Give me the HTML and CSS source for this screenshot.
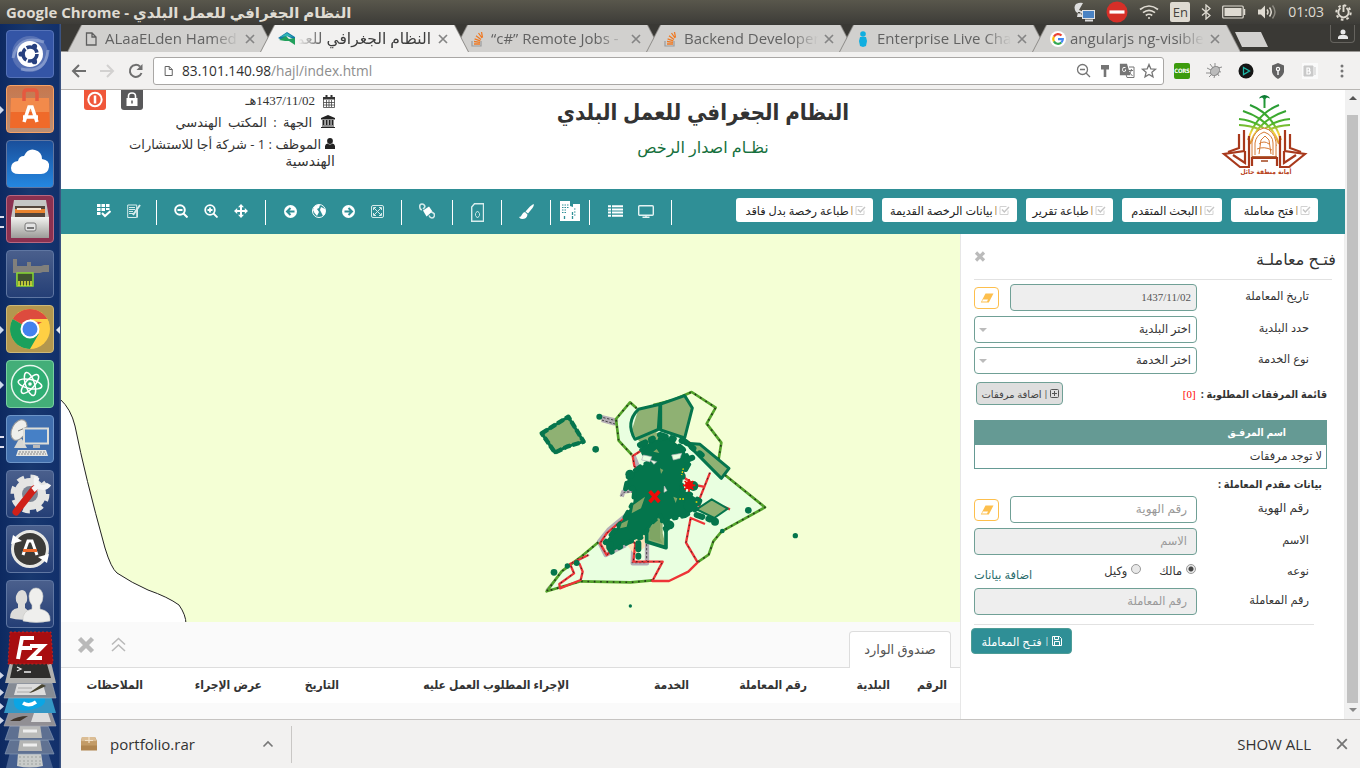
FILE: index.html
```html
<!DOCTYPE html>
<html lang="ar">
<head>
<meta charset="utf-8">
<title>النظام الجغرافي للعمل البلدي</title>
<link rel="stylesheet" href="styles.css">
</head>
<body>
<svg class="defs" aria-hidden="true">
  <defs>
    <linearGradient id="metal" x1="0" y1="0" x2="0" y2="1"><stop offset="0" stop-color="#f2f2f0"/><stop offset="1" stop-color="#9c9c98"/></linearGradient>
    <linearGradient id="palm" gradientUnits="userSpaceOnUse" x1="0" y1="0" x2="0" y2="84"><stop offset="0" stop-color="#0c8a3a"/><stop offset=".35" stop-color="#4fb52c"/><stop offset=".46" stop-color="#f3d33c"/><stop offset=".62" stop-color="#e08a35"/><stop offset="1" stop-color="#8f2115"/></linearGradient>
  </defs>
  <symbol id="doc" viewBox="0 0 12 14"><path d="M1.500 1h5.500l4 4v8h-9.500zM7 1v4h4" fill="none" stroke="#5f5f5f" stroke-width="1.300"/></symbol>
  <symbol id="cross" viewBox="0 0 10 10"><path d="M1 1l8 8M9 1l-8 8" stroke="#858585" stroke-width="1.700"/></symbol>
  <symbol id="stack" viewBox="0 0 13 16"><path d="M1 10v5h9v-5" fill="none" stroke="#9a9b9d" stroke-width="1.200"/><path d="M3 13h6M3 10.500l6 .8M3.600 7.800l5.700 2M5 4.800l5 3.700M7.500 2l3.500 5M10.500 1l1 5.500" stroke="#ef7a24" stroke-width="1.300"/></symbol>
  <symbol id="check" viewBox="0 0 11 11"><path d="M9 5.500V9.500H1V1.500h6.500" fill="none" stroke="#d2d2d2"/><path d="M3 4.500l2.300 2.500L10 2" fill="none" stroke="#c6c6c6" stroke-width="1.400"/></symbol>
  <symbol id="eraser" viewBox="0 0 14 10"><path d="M5.500.5h8L8.800 9.500h-8z" fill="#fdbf4d"/><path d="M3 6.500h5L7 8.500H2z" fill="#fff"/></symbol>
</svg>

<header class="panelbar">
  <div class="win-title" dir="rtl">النظام الجغرافي للعمل البلدي - Google Chrome</div>
  <div class="tray">
    <svg width="22" height="20" viewBox="0 0 22 20"><path d="M2 10Q-1 5 2 2q4-2 7-1L5 8l5 2Q6 13 2 10zM4 10l-1 5h6l-3-5" fill="#ddd"/><rect x="8.500" y="8.500" width="12" height="8" fill="#4a83c4" stroke="#e4e4e4"/><path d="M11 18.500h8" stroke="#ddd" stroke-width="2"/></svg>
    <svg width="22" height="22" viewBox="0 0 22 22"><circle cx="11" cy="11" r="10.500" fill="#d62f28"/><path d="M3.500 11h15" stroke="#fff" stroke-width="3.200"/></svg>
    <svg width="20" height="16" viewBox="0 0 20 16" fill="none" stroke="#dfdbd2" stroke-width="1.700"><path d="M1 5.500Q10-1.500 19 5.500M4 8.700Q10 4 16 8.700M6.800 11.500q3.200-2.500 6.400 0"/><circle cx="10" cy="14" r="1" fill="#dfdbd2" stroke="none"/></svg>
    <span class="lang">En</span>
    <svg width="10" height="16" viewBox="0 0 10 16"><path d="M1 4.500l8 7L5 15V1l4 3.500-8 7" fill="none" stroke="#dfdbd2" stroke-width="1.300"/></svg>
    <svg width="24" height="14" viewBox="0 0 24 14"><rect x=".7" y="1" width="20.500" height="12" rx="1" fill="none" stroke="#dfdbd2" stroke-width="1.200"/><rect x="2.500" y="3" width="17" height="8" fill="#dfdbd2"/><path d="M22.500 4v6" stroke="#dfdbd2" stroke-width="1.500"/></svg>
    <svg width="20" height="16" viewBox="0 0 20 16"><path d="M1 5.500h3l4-4v13l-4-4H1z" fill="#dfdbd2"/><path d="M10 5.500q2 2.500 0 5M12.500 3.500q3.500 4.500 0 9" fill="none" stroke="#dfdbd2" stroke-width="1.500"/><path d="M15.500 1.500q5 6.500 0 13" fill="none" stroke="#8b8980" stroke-width="1.500"/></svg>
    <span class="clock">01:03</span>
    <svg width="17" height="17" viewBox="0 0 17 17"><circle cx="8.500" cy="8.500" r="7.200" fill="none" stroke="#dfdbd2" stroke-width="2" stroke-dasharray="2.600 3.050"/><path d="M5.500 4a5.200 5.200 0 1 0 6 0M8.500 1v7" fill="none" stroke="#dfdbd2" stroke-width="1.900"/></svg>
  </div>
</header>

<div class="desktop">
  <nav class="launcher">
    <span class="app blue"><svg viewBox="0 0 48 48"><circle cx="24" cy="24" r="18" fill="#7488c0" opacity=".55"/><path d="M7 28Q12 4 38 12M42 20Q40 44 15 39" fill="none" stroke="#9fb0da" stroke-width="3" opacity=".6"/><circle cx="24" cy="24" r="13" fill="#fff"/><circle cx="24" cy="24" r="7" fill="none" stroke="#27407f" stroke-width="3.600" stroke-dasharray="13 1.660"/><circle cx="15" cy="24" r="2.600" fill="#27407f"/><circle cx="28.500" cy="16.300" r="2.600" fill="#27407f"/><circle cx="28.500" cy="31.700" r="2.600" fill="#27407f"/></svg></span>
    <span class="app orange pip"><svg viewBox="0 0 48 48"><path d="M5 13h38l1 30H4z" fill="#ef6a2a"/><path d="M5 13h38l.3 14H4.500z" fill="#f28a4b"/><path d="M18 16V8q0-3 3-3h7q3 0 3 3v8" fill="none" stroke="#e5593f" stroke-width="3.500"/><path d="M18 37l5-15h3l5 15M17 32h15" fill="none" stroke="#fff" stroke-width="3.500"/></svg></span>
    <span class="app sky"><svg viewBox="0 0 48 48"><path d="M13 34q-8 0-8-6t7-7q1-5 6-5 4-8 11-6t7 9q8 1 7 8t-8 7z" fill="#fff"/></svg></span>
    <span class="app maroon pips"><svg viewBox="0 0 48 48"><path d="M8 5h32l3 18v20H5V23z" fill="#c6c6c4"/><path d="M9 11h30v14H9z" fill="#54453b"/><path d="M9 14h30v4H9z" fill="#e9832e"/><path d="M11 13h24v2H11z" fill="#f5e5d2"/><path d="M5 22h38v21H5z" fill="url(#metal)"/><rect x="19" y="28" width="11" height="8" rx="2" fill="#e3e3e3" stroke="#777"/><path d="M21 33h7" stroke="#777" stroke-width="2"/></svg></span>
    <span class="app"><svg viewBox="0 0 48 48"><path d="M7 9h4v7h24l3-1h5v7h-6l-3 1H17v5h-4v7h-3V23H7zM21 12h4v4h-4z" fill="#81807c"/><rect x="11" y="23" width="16" height="13" fill="#3f5230" stroke="#87d630" stroke-width="1.500"/><path d="M13 31v5m3-5v5m3-5v5m3-5v5m3-5v5" stroke="#dce03b" stroke-width="1.600"/></svg></span>
    <span class="app gold pip active"><svg viewBox="0 0 48 48"><circle cx="24" cy="24" r="20" fill="#ffcf44"/><path d="M24 24L6.700 14A20 20 0 0 1 41.300 14z" fill="#dd4b3e"/><path d="M24 14h17.300A20 20 0 0 1 43 18L24 16z" fill="#ffcf44"/><path d="M6.700 14A20 20 0 0 0 24 44l8.700-15L24 24z" fill="#1aa05c"/><circle cx="24" cy="24" r="9.500" fill="#fff"/><circle cx="24" cy="24" r="7.500" fill="#4382ee"/></svg></span>
    <span class="app green pip"><svg viewBox="0 0 48 48"><circle cx="24" cy="24" r="18.500" fill="#2fae73" stroke="#e7f7ee" stroke-width="1.500"/><g fill="none" stroke="#fff" stroke-width="1.500"><ellipse cx="24" cy="24" rx="12" ry="4.500" transform="rotate(12 24 24)"/><ellipse cx="24" cy="24" rx="12" ry="4.500" transform="rotate(72 24 24)"/><ellipse cx="24" cy="24" rx="12" ry="4.500" transform="rotate(132 24 24)"/></g><circle cx="24" cy="24" r="1.800" fill="#fff"/></svg></span>
    <span class="app steel pips"><svg viewBox="0 0 48 48"><path d="M13 24l-5 9h13l-5-9" fill="#d8d8d4"/><ellipse cx="13" cy="15" rx="7" ry="11" transform="rotate(28 13 15)" fill="#efefeb" stroke="#999"/><path d="M12 16l9-4" stroke="#777"/><rect x="18" y="13.500" width="24" height="15" fill="#4680c6" stroke="#deded8" stroke-width="2"/><path d="M27 30h7v3h-7z" fill="#bbb"/><path d="M12 35h28l2 6H10z" fill="#e6e6e2"/><path d="M13 37h27M12 39h28" stroke="#888" stroke-dasharray="2 1"/></svg></span>
    <span class="app"><svg viewBox="0 0 48 48"><circle cx="24" cy="24" r="16" fill="#e5e5e3"/><circle cx="24" cy="24" r="17" fill="none" stroke="#e5e5e3" stroke-width="5" stroke-dasharray="7 6.350"/><circle cx="24" cy="24" r="8" fill="#7e8593"/><path d="M10 42l18-23" stroke="#d02018" stroke-width="7" stroke-linecap="round"/><path d="M27 20l7-6M31 7q-3 8 3 10t9-3" fill="none" stroke="#f4f4f4" stroke-width="5"/></svg></span>
    <span class="app"><svg viewBox="0 0 48 48"><circle cx="24" cy="24" r="17.500" fill="#3c3b38" stroke="#e8e8e4" stroke-width="3"/><path d="M5 19l2-9 9 6zM43 29l-2 9-9-6z" fill="#fff"/><path d="M17 30l5-14h4l5 14" fill="none" stroke="#fff" stroke-width="3"/><path d="M17 25.500h14" stroke="#f06a2a" stroke-width="3"/></svg></span>
    <span class="app"><svg viewBox="0 0 48 48"><path d="M4 38q0-9 8-10v-4q-3-3-2-8 2-6 6-6t5 6q1 5-2 8v4l6 5v6q-12 2-21-1z" fill="#dcdcda"/><path d="M17 41q-1-10 9-12v-4q-3-3-3-9 1-8 7-8t7 8q0 6-3 9v4q11 2 10 12-14 3-27 0z" fill="#efefed" stroke="#c7c7c5" stroke-width=".6"/></svg></span>
    <svg class="folded" viewBox="0 631 61 137" width="61" height="137">
      <path d="M0 672l4 3.500-4 3.500zM0 689l4 3.500-4 3.500zM0 703l4 3.500-4 3.500zM0 717l4 3.500-4 3.500z" fill="#cfd6e6"/>
      <path d="M10 752h38l5 16H6z" fill="#46608f"/><path d="M18 753q11-4 23 0l2 13q-13 3-26 0z" fill="#c9ccca"/><path d="M19 757h22m-22 4h22m-22 3h22" stroke="#9da2a0" stroke-dasharray="2 2"/>
      <path d="M10 740h38l6 14H5z" fill="#607292" stroke="#8c9dbb" stroke-width=".6"/><path d="M20 738h20l2 13H18z" fill="#b4b5b4"/><path d="M23 745h14" stroke="#eee" stroke-width="3"/>
      <path d="M10 726h38l6 14H5z" fill="#5e7091" stroke="#8c9dbb" stroke-width=".6"/><path d="M20 724h20l2 14H18z" fill="#bcbcba"/><path d="M23 731h14" stroke="#eee" stroke-width="3"/>
      <path d="M9 712h42l5 14H4z" fill="#918f94" stroke="#a7adbb" stroke-width=".6"/><path d="M10 721q7-5 18-5l-8 5z" fill="#40362d"/><path d="M34 713h14l3 9H31z" fill="#ddd"/>
      <path d="M9 696h42l5 17H4z" fill="#3497c5"/><path d="M14 698q0-5 15-5t16 7-16 10-15-12z" fill="#0ba5e4"/><path d="M23 703q6 4 13-1" fill="none" stroke="#fff" stroke-width="3.500"/>
      <path d="M9 683h43l4 15H4z" fill="#858b94" stroke="#abb2bd" stroke-width=".6"/><path d="M17 684h26l3 11H14z" fill="#ddd"/><path d="M18 688h14m-15 4h15" stroke="#aaa"/><path d="M29 693l13-9 4 2-13 6z" fill="#46432f"/>
      <path d="M10 662h41l5 21H5z" fill="#b0b0ae"/><path d="M13 664h34l4 14H10z" fill="#2e2d2c"/><path d="M17 667l4 2-4 2M24 672h7" fill="none" stroke="#eee" stroke-width="1.300"/>
      <path d="M10 632h41l2 30-1 2H8z" fill="#a80d10" stroke="#bd2423" stroke-dasharray="2 2"/><path d="M18 659l4-21h12M20 648h12M30 646h13l-12 12h11" fill="none" stroke="#fff" stroke-width="4"/>
    </svg>
  </nav>

  <div class="browser">
    <div class="tabstrip">
      <div class="tab"><svg class="fav" width="12" height="14"><use href="#doc"/></svg><span class="tab-text">ALaaELden Hamed</span><svg class="x" width="10" height="10"><use href="#cross"/></svg></div>
      <div class="tab active-tab"><svg class="fav" width="17" height="13" viewBox="0 0 17 13"><path d="M0 6l9-6 8 5v3L9 4 4 8z" fill="#1279a8"/><path d="M1 8l7-4 3 3 6-1v7l-6-4-4 0z" fill="#22a05c"/><path d="M2 5l7-4 6 4-6-1z" fill="#31b6b4"/></svg><span class="tab-text rtl-tab" dir="rtl">النظام الجغرافي للعمل</span><svg class="x" width="10" height="10"><use href="#cross"/></svg></div>
      <div class="tab"><svg class="fav" width="13" height="16"><use href="#stack"/></svg><span class="tab-text">“c#” Remote Jobs -</span><svg class="x" width="10" height="10"><use href="#cross"/></svg></div>
      <div class="tab"><svg class="fav" width="13" height="16"><use href="#stack"/></svg><span class="tab-text">Backend Developer</span><svg class="x" width="10" height="10"><use href="#cross"/></svg></div>
      <div class="tab"><svg class="fav" width="12" height="16" viewBox="0 0 12 16"><circle cx="6" cy="3" r="2.800" fill="#10aee0"/><path d="M3 6h6l1 4-1 5-3 1-3-1-1-5z" fill="#10aee0"/></svg><span class="tab-text">Enterprise Live Cha</span><svg class="x" width="10" height="10"><use href="#cross"/></svg></div>
      <div class="tab"><svg class="fav" width="16" height="16" viewBox="0 0 16 16"><circle cx="8" cy="8" r="8" fill="#fff"/><g fill="none" stroke-width="2.200"><path d="M11.500 4.600A4.800 4.800 0 0 0 3.900 5.600" stroke="#ea4335"/><path d="M3.900 5.600a4.800 4.800 0 0 0 0 4.800" stroke="#fbbc05"/><path d="M3.900 10.400a4.800 4.800 0 0 0 7.400 1.100" stroke="#34a853"/><path d="M11.300 11.500A4.800 4.800 0 0 0 12.800 8.200H8" stroke="#4285f4"/></g></svg><span class="tab-text">angularjs ng-visible</span><svg class="x" width="10" height="10"><use href="#cross"/></svg></div>
      <span class="newtab"></span>
      <span class="profile"><svg width="10" height="10" viewBox="0 0 10 10" fill="#e8e8e8"><circle cx="5" cy="3" r="2.500"/><path d="M0 10V8q1-2 3-2h4q2 0 3 2v2z"/></svg></span>
    </div>

    <div class="toolbar">
      <svg width="76" height="18" viewBox="0 0 76 18" fill="none" stroke-width="2"><path d="M8 3L2 9l6 6M2 9h13" stroke="#6e6e6e"/><path d="M36 3l6 6-6 6M42 9H29" stroke="#d2d1d0"/><path d="M69 4.500A6 6 0 1 0 70.500 11" stroke="#6e6e6e"/><path d="M71.500 2v6h-6z" fill="#6e6e6e"/></svg>
      <div class="omnibox">
        <svg width="9" height="12"><use href="#doc"/></svg>
        <span class="url"><span class="host">83.101.140.98</span>/hajl/index.html</span>
        <svg width="82" height="16" viewBox="0 0 82 16" fill="none" stroke="#757575" stroke-width="1.300"><circle cx="6.500" cy="6.500" r="5"/><path d="M4 6.500h5M10 10l4 4"/><path d="M25 2h8v4.500h-8z" fill="#757575" stroke="none"/><path d="M29 6v8" stroke-width="2.600"/><path d="M44.500 1.500h6l3 10h-9z" fill="#777"/><path d="M53 4h5v10.500h-7l-1-3M51.500 7.500h5.500M55.500 6q-.5 4-3 6M53 9l3.500 4" stroke-width="1"/><path d="M49.500 4.500q-3-1-3 2t3 1.500V6.500" stroke="#fff" stroke-width="1"/><path d="M73 1.500l1.800 4.300 4.700.4-3.600 3.100 1.100 4.600-4-2.500-4 2.500 1.100-4.600-3.600-3.100 4.700-.4z"/></svg>
      </div>
      <div class="exts">
        <span class="cors">CORS</span>
        <svg width="16" height="16" viewBox="0 0 16 16"><path d="M1 5l4 2M0 10h5M3 14l3-3M4 1l3 4M9 0l0 4M8 15l1-4M13 13l-2-3M15 9l-4-1M16 4l-4 1" stroke="#8d8d8d"/><ellipse cx="9" cy="8" rx="5" ry="4" transform="rotate(-45 9 8)" fill="#bbb" stroke="#888"/></svg>
        <svg width="16" height="16" viewBox="0 0 16 16"><circle cx="8" cy="8" r="7.500" fill="#151515"/><path d="M5.500 4.500l6 3.500-6 3.500z" fill="none" stroke="#1fb8a8" stroke-width="1.300"/></svg>
        <svg width="16" height="16" viewBox="0 0 16 16"><path d="M8 0l6 2.500V9q-1 4-6 7-5-3-6-7V2.500z" fill="#626262"/><circle cx="8" cy="6" r="2.200" fill="#fff"/><circle cx="8" cy="6" r="1" fill="#626262"/><path d="M8 8v4" stroke="#fff" stroke-width="1.400"/></svg>
        <svg width="16" height="16" viewBox="0 0 16 16"><path d="M0 0h16v16H0z" fill="#fafafa"/><path d="M2 3h9v10H2zM13 4v8" fill="#c9c9c9" stroke="#c9c9c9"/><path d="M5 5v6h2.500q1.500-1.500 0-3H5h2q1.500-1.500 0-3z" fill="none" stroke="#fff" stroke-width="1.200"/></svg>
        <svg width="16" height="16" viewBox="0 0 16 16" fill="#757575"><circle cx="8" cy="3" r="1.500"/><circle cx="8" cy="8" r="1.500"/><circle cx="8" cy="13" r="1.500"/></svg>
      </div>
    </div>

    <div class="viewport">
      <main class="page">
        <header class="site-head">
          <div class="actions">
            <svg width="22" height="20" viewBox="0 0 22 20"><path d="M0 0h22v17q0 3-3 3H3q-3 0-3-3z" fill="#f0573a"/><circle cx="11" cy="9.500" r="6.700" fill="none" stroke="#fff" stroke-width="2"/><path d="M11 5.500v8" stroke="#fff" stroke-width="2.500"/></svg>
            <svg width="22" height="20" viewBox="0 0 22 20"><path d="M0 0h22v17q0 3-3 3H3q-3 0-3-3z" fill="#58585a"/><path d="M5.500 8h11v8h-11z" fill="#fff"/><path d="M7.500 8V6q0-3 3.500-3t3.500 3v2" fill="none" stroke="#fff" stroke-width="1.600"/><path d="M11 10.500v3" stroke="#58585a" stroke-width="1.500"/></svg>
          </div>
          <div class="user" dir="rtl">
            <div class="u1"><svg width="12" height="13" viewBox="0 0 12 13"><path d="M.5 2.500h11v10H.5zM.5 7.500h11M.5 10h11M3.500 5v7M6 5v7M8.500 5v7" fill="none" stroke="#444" stroke-width=".8"/><path d="M0 2h12v2.500H0zM2.500 0h2v3h-2zM7.500 0h2v3h-2z" fill="#333"/></svg><span>1437/11/02هـ</span></div>
            <div class="u2"><svg width="14" height="13" viewBox="0 0 14 13" fill="#222"><path d="M7 0l7 3v1.500H0V3zM1.500 5h2v5h-2zM4.600 5h2v5h-2zM7.600 5h2v5h-2zM10.500 5h2v5h-2zM1 10.500h12v1H1zM0 12h14v1H0z"/></svg><span>الجهة : المكتب الهندسي</span></div>
            <div class="u3"><svg width="10" height="11" viewBox="0 0 10 11" fill="#222"><circle cx="5" cy="3" r="2.900"/><path d="M0 11V8q.5-2.500 2.500-2.500Q5 7.500 7.500 5.500 9.500 5.500 10 8v3z"/></svg><span>الموظف : 1 - شركة أجا للاستشارات</span></div>
            <div class="u4"><span>الهندسية</span></div>
          </div>
          <div class="titles" dir="rtl">
            <h1>النظام الجغرافي للعمل البلدي</h1>
            <h2>نظـام اصدار الرخص</h2>
          </div>
          <div class="emblem">
            <svg width="90" height="84" viewBox="0 0 90 84">
              <path d="M38 4.500q1-3 5.500-3.500 4.500.5 5.500 3.500l-3-1-2.500 2-2.500-2z" fill="#0c7a33"/>
              <g fill="none" stroke="url(#palm)" stroke-width="2">
                <path d="M43.500 3v11"/>
                <path d="M29 11Q52 20 60 46M58 11Q35 20 27 46M22 17Q50 26 58 50M65 17Q37 26 29 50M18 25Q46 28 55 52M69 25Q41 28 32 52M18 31Q40 32 49 44M69 31Q47 32 38 44"/>
              </g>
              <path d="M31 63V48q2-12 12-14 10 2 12 14v15z" fill="#fff" stroke="#d67a35"/>
              <g fill="none" stroke="#d67a35" stroke-width="1"><path d="M34 61V49q1-8 9-11 9 3 9 11v12M38 60l2-14 4-4 4 4 2 14M38 50q5-4 10 0M36 55q7-3 15 1"/></g>
              <g fill="none" stroke="#a8391c" stroke-width="2.200"><path d="M31 72V64h25v8"/><path d="M23 36v21L3 60l16 13h10M24 57v12l-12-8"/><path d="M18 40v14L7 58M28 42v30"/><path d="M64 36v21l20 3-16 13H58M63 57v12l12-8"/><path d="M69 40v14l11 4M59 42v30"/></g>
              <path d="M31 63h25M40 67h7" stroke="#a4451e" stroke-width="1.500"/>
            </svg>
            <span class="emb-text" dir="rtl">أمانة منطقة حائل</span>
          </div>
        </header>

        <div class="actionbar">
          <div class="icons">
            <div class="grp g1"><i><svg width="14" height="14" viewBox="0 0 14 14" fill="#fff"><path d="M0 0h3.500v3H0zM4.500 0H8v3H4.500zM9 0h3.500v3H9zM0 4h3.500v3H0zM4.500 4H8v3H4.500zM9 4h3.500v2H9zM0 8h3.500v3H0z"/><path d="M5 9l3 3 5.500-5" fill="none" stroke="#fff" stroke-width="2"/></svg></i><i><svg width="14" height="14" viewBox="0 0 14 14" fill="none" stroke="#d8ecec"><path d="M.7 1h9v12.500h-9zM2 3.500h6M2 5.500h6M2 7.500h4M2 9.500h4M10.500 6v7.500"/><path d="M13 1L6 11" stroke-width="2"/></svg></i></div>
            <div class="grp g2"><i><svg width="14" height="14" viewBox="0 0 14 14" fill="none" stroke="#fff" stroke-width="2"><circle cx="6" cy="6" r="4.800"/><path d="M3.500 6h5M9.500 9.500l4 4"/></svg></i><i><svg width="14" height="14" viewBox="0 0 14 14" fill="none" stroke="#fff" stroke-width="1.800"><circle cx="6" cy="6" r="4.800"/><path d="M3.500 6h5M6 3.500v5M9.500 9.500l4 4"/></svg></i><i><svg width="14" height="14" viewBox="0 0 14 14" fill="#fff"><path d="M7 0l3 3.200H8v2.800h2.800V4L14 7l-3.200 3V8H8v2.800h2L7 14l-3-3.200h2V8H3.200v2L0 7l3.200-3v2H6V3.200H4z"/></svg></i></div>
            <div class="grp g3"><i><svg width="13" height="13" viewBox="0 0 13 13"><circle cx="6.500" cy="6.500" r="6.500" fill="#fff"/><path d="M10.500 6.500H3M6.500 3L3 6.500 6.500 10" fill="none" stroke="#2f8f96" stroke-width="2"/></svg></i><i><svg width="14" height="14" viewBox="0 0 14 14"><circle cx="7" cy="7" r="6.500" fill="#2f8f96" stroke="#fff"/><path d="M2 3q3-3 6-2l-1 3-2 1 2 3-2 4Q2 9 1 6zM9 3l4 2v5l-2 2-2-4-1-2z" fill="#fff"/></svg></i><i><svg width="13" height="13" viewBox="0 0 13 13"><circle cx="6.500" cy="6.500" r="6.500" fill="#fff"/><path d="M2.500 6.500H10M6.500 3L10 6.500 6.500 10" fill="none" stroke="#2f8f96" stroke-width="2"/></svg></i><i><svg width="13" height="13" viewBox="0 0 13 13" fill="none" stroke="#d4eaea"><rect x=".5" y=".5" width="12" height="12" rx="1.500"/><path d="M3 3l7 7M10 3l-7 7M2.500 5V2.500H5M8 2.500h2.500V5M10.500 8v2.500H8M5 10.500H2.500V8"/></svg></i></div>
            <div class="grp g4"><i><svg width="16" height="16" viewBox="0 0 16 16"><path d="M4 7.500l6-4 3.500 5-6 5z" fill="#fff"/><path d="M6 4Q5.500 1 3 1T.8 4 3 6.500M6 4L4 6" stroke="#d6eaea" stroke-width="1.600" fill="none"/><path d="M12 9q4 1 3.500 3.500T13 15t-3-2.500" fill="none" stroke="#d6eaea" stroke-width="1.500"/></svg></i></div>
            <div class="grp g5"><i><svg width="13" height="19" viewBox="0 0 13 19" fill="none" stroke="#d9eded"><path d="M3.500.7h9v17.500H.7V4z" stroke-width="1.400"/><path d="M6.500 8L8.500 10.500v2L6.500 15l-2-2.500v-2z" stroke-width=".9"/></svg></i></div>
            <div class="grp g6"><i><svg width="15" height="15" viewBox="0 0 15 15" fill="#fff"><path d="M14.500 0q1 1-1 4L9 9.500 6.500 7.500 11 2.500Q14 0 14.500 0zM6 8l2.500 2.500Q8 15 3 15q-2 0-3-2 2 0 3-2.500T6 8z"/></svg></i></div>
            <div class="grp g7"><i><svg width="20" height="20" viewBox="0 0 20 20"><path d="M0 0h10v5l3 1V3h7v17H0z" fill="#fff"/><path d="M2 4h7M2 6.500h7M2 9h5M14 8h2M14 11h2M14 14h2M2 11.500h4" stroke="#2f8f96" stroke-dasharray="1.500 1"/><path d="M4.500 15v4M12.500 11v8" stroke="#2f8f96" stroke-width="1.300" stroke-dasharray="3 1"/></svg></i></div>
            <div class="grp g8"><i><svg width="15" height="12" viewBox="0 0 15 12"><path d="M0 1.200h3M4 1.200h11M0 4.400h3M4 4.400h11M0 7.600h3M4 7.600h11M0 10.800h3M4 10.800h11" stroke="#fff" stroke-width="2"/></svg></i><i><svg width="16" height="13" viewBox="0 0 16 13" fill="none" stroke="#e5f3f3" stroke-width="1.400"><rect x=".7" y=".7" width="14.600" height="9.500" rx="1"/><path d="M8 10v2M4.500 12.300h7"/></svg></i></div>
          </div>
          <div class="buttons" dir="rtl">
            <button class="w87"><svg width="11" height="11"><use href="#check"/></svg><b>|</b><span>فتح معاملة</span></button>
            <button class="w100"><svg width="11" height="11"><use href="#check"/></svg><b>|</b><span>البحث المتقدم</span></button>
            <button class="w87"><svg width="11" height="11"><use href="#check"/></svg><b>|</b><span>طباعة تقرير</span></button>
            <button class="w135"><svg width="11" height="11"><use href="#check"/></svg><b>|</b><span>بيانات الرخصة القديمة</span></button>
            <button class="w137"><svg width="11" height="11"><use href="#check"/></svg><b>|</b><span>طباعة رخصة بدل فاقد</span></button>
          </div>
        </div>

        <div class="work">
          <section class="left">
            <svg class="map" width="899" height="388" viewBox="61 234 899 388">
              <path d="M60 399q11 10 15 27 10 50 30 122 6 20 12 25 15 10 31 17 20 7 31 15 7 10 7 19H60z" fill="#fff" stroke="#222"/>
              <g transform="translate(530 380) scale(.33333)" stroke-linejoin="round">
                <path d="M300 67L258 117 266 182 306 225 310 300 330 330 300 400 205 487 155 529 95 574 50 634 152 604 302 607 367 604H415L475 580 503 545 535 515 549 475 574 453 705 381 585 285 540 265 400 100 320 85z" fill="#e9ffe0"/>
                <g fill="none" stroke="#b4adb5" stroke-width="13"><path d="M208 110l50 12-5 8-38-10M310 225l20 50 5 30-15 40M275 350l5-15 35-5M295 400l-60 50-28 35 20 40 60-30M310 485l-2 65h43v-70"/><path d="M48 630l60-70 70-35M585 285l120 95" stroke-width="4"/></g>
                <path d="M208 110l50 12M215 120l40 12M272 348l12-12 30 0M350 480v68h-45" fill="none" stroke="#2a2a2a" stroke-width="2.500" stroke-dasharray="7 5"/>
                <path d="M300 450l45-10v60l-30 25-40-50zM410 180l30 5-15 20-20-8zM440 260l25 10-20 20zM420 405l30-5-10 15zM215 490l30-25 30 15-45 35z" fill="#fbe3b8"/>
                <g fill="none" stroke="#53a32b" stroke-width="8"><path d="M320 85l-20-18-42 50 8 65 40 43M370 75l60-15 55-24 72 47-27 48 44 57-9 55M585 285l120 97-130 72-25 30-14 40-32 22M205 487l-50 42-60 45-45 60 102-30 150 3 65-6"/></g>
                <g fill="none" stroke="#26391c" stroke-width="5" stroke-dasharray="5 14"><path d="M320 85l-20-18-42 50 8 65 40 43M370 75l60-15 55-24 72 47-27 48 44 57-9 55M585 285l120 97-130 72-25 30-14 40-32 22M205 487l-50 42-60 45-45 60 102-30 150 3 65-6"/></g>
                <g fill="none" stroke="#ee3437" stroke-width="7"><path d="M340 208l-32 20 5 30 25 30-5 30M300 400l-70 60-20 30 20 35 58-50 28 15-6 55h88L367 603h50L475 575 503 547 468 488 482 414 525 432M540 278l-20 50-18 45 20 15M455 180l25 8M455 265l10 30 30 20 25 5M600 388l-20-8M175 525L120 552 132 580 88 612 90 625 152 600 158 575 148 550"/></g>
                <path d="M340 208l-32 20 5 30 25 30-5 30M300 400l-70 60-20 30 20 35 58-50 28 15-6 55h88L367 603M503 547L468 488 482 414M540 278l-20 50-18 45 20 15M175 525L120 552 132 580 88 612M152 600l6-25-10-25" fill="none" stroke="#3b2222" stroke-width="3" stroke-dasharray="5 12"/>
                <path d="M325 88l65-15 72-25 25 35-23 90-75-22-60 34-25-30zM35 160l80-50 46 75-50 15-36 18zM475 190l35 5 85 70-22 28zM500 388l45-30 48 28-40 28zM325 175l45-20 45 12-22 30-60-2zM350 440l48-40v60l10 40-58-15z" fill="#8fb173"/>
                <g fill="none" stroke="#05754d"><path d="M325 88q-40 40-10 90l70-30 5-75zM392 72l72-25 23 37-23 90-72-24zM35 160l80-50 46 75-50 15-36 18z" stroke-width="9"/><path d="M470 190l40 3 87 72-23 30z" stroke-width="9"/><path d="M500 388l45-30 48 28-40 28z" stroke-width="6"/><path d="M35 160l80-50 46 75-50 15-36 18z" stroke-width="13" stroke-dasharray="21 7"/><path d="M350 440v45l58 18v-95" stroke-width="11"/></g>
                <path d="M335 210l30-28 50-10 45 35 20 40-20 35-5 45 25 15 30 20-10 25-35 20-45 10-10 40-20-50-35 40-20 25-40 15-50 30-20-30 60-75 25-45 5-45-30 10 10-45 40-30 25-10z" fill="#04754c"/>
                <g fill="none" stroke="#04754c" stroke-width="14" stroke-linecap="round" stroke-dasharray="18 19 6 24"><path d="M335 210l30-28 50-10 45 35 20 40-20 35-5 45 25 15 30 20-10 25-35 20-45 10-10 40-20-50-35 40-20 25-40 15-50 30-20-30 60-75 25-45 5-45-30 10 10-45 40-30 25-10z"/><path d="M330 195l60-30 75 20 50 40M470 240l25-10M325 490v40M500 405l60 20" stroke-width="18"/></g>
                <g fill="#04754c"><circle cx="208" cy="110" r="9"/><circle cx="197" cy="208" r="10"/><circle cx="655" cy="391" r="10"/><circle cx="796" cy="467" r="8"/><circle cx="72" cy="577" r="10"/><circle cx="577" cy="453" r="7"/><circle cx="301" cy="678" r="5"/><circle cx="300" cy="283" r="14"/><circle cx="480" cy="375" r="20"/><circle cx="555" cy="425" r="12"/><circle cx="490" cy="318" r="15"/><circle cx="112" cy="558" r="8"/><circle cx="140" cy="549" r="9"/><circle cx="240" cy="495" r="12"/><circle cx="420" cy="435" r="13"/></g>
                <path d="M340 225l25 5-5 15-25-5zM425 225l30-5-5 15-20 5zM360 240l20 5-8 8zM403 318l8 14-9 5z" fill="#e9ffe0" stroke="#b4adb5" stroke-width="2"/>
                <path d="M310 375l35-25-12 35-28 15zM275 430l20-10-5 20-20 5zM390 265l10 5-7 12zM430 350l12 5-5 14zM370 215l10-8 8 12zM358 445l32-30v60l8 15-40-12z" fill="#7fa564"/>
                <path d="M460 265l-5 20M448 357h14M497 366h5" stroke="#ffd900" stroke-width="4" stroke-dasharray="5 4"/>
                <path d="M359 334l29 32M388 334l-29 32" stroke="#ed0c08" stroke-width="11"/>
                <path d="M477 297v38M459 316h37M464 303l26 26M490 303l-26 26" stroke="#ed0c08" stroke-width="5"/><circle cx="477" cy="316" r="12" fill="#ed0c08"/>
              </g>
            </svg>
            <div class="inbox">
              <div class="inbox-head">
                <svg width="50" height="18" viewBox="0 0 50 18" fill="none" stroke="#b9b9b9"><path d="M2.500 2.500l13 13M15.500 2.500l-13 13" stroke-width="4.500"/><path d="M35 8.500l6.500-6 6.500 6M35 15l6.500-6 6.500 6" stroke-width="1.600"/></svg>
                <div class="inbox-tab" dir="rtl">صندوق الوارد</div>
              </div>
              <div class="cols" dir="rtl">
                <span class="c1">الرقم</span><span class="c2">البلدية</span><span class="c3">رقم المعاملة</span><span class="c4">الخدمة</span><span class="c5">الإجراء المطلوب العمل عليه</span><span class="c6">التاريخ</span><span class="c7">عرض الإجراء</span><span class="c8">الملاحظات</span>
              </div>
            </div>
          </section>

          <aside class="side" dir="rtl">
            <div class="side-head"><span class="side-title">فتـح معاملـة</span><svg width="12" height="11" viewBox="0 0 11 11"><path d="M1.500 1.500l8 8M9.500 1.500l-8 8" stroke="#bbb" stroke-width="3.200"/></svg></div>
            <div class="row r1"><label>تاريخ المعاملة</label><div class="field dis short num">1437/11/02</div><span class="erase"><svg width="14" height="10"><use href="#eraser"/></svg></span></div>
            <div class="row r2"><label>حدد البلدية</label><div class="field select">اختر البلدية</div></div>
            <div class="row r3"><label>نوع الخدمة</label><div class="field select">اختر الخدمة</div></div>
            <div class="attach"><strong>قائمة المرفقات المطلوبة :</strong><span class="count">[0]</span><button class="add"><svg width="9" height="9" viewBox="0 0 9 9" fill="none" stroke="#555"><rect x=".5" y=".5" width="8" height="8" rx="1"/><path d="M2 4.500h5M4.500 2v5"/></svg><b>|</b><span>اضافة مرفقات</span></button></div>
            <div class="files"><div class="files-h">اسم المرفـق</div><div class="files-b">لا توجد مرفقات</div></div>
            <div class="sub">بيانات مقدم المعاملة :</div>
            <div class="row r4"><label>رقم الهوية</label><div class="field short ph">رقم الهوية</div><span class="erase"><svg width="14" height="10"><use href="#eraser"/></svg></span></div>
            <div class="row r5"><label>الاسم</label><div class="field dis ph">الاسم</div></div>
            <div class="row r6"><label>نوعه</label><div class="radios"><i class="radio on"></i><span class="ra">مالك</span><i class="radio"></i><span>وكيل</span><a class="more">اضافة بيانات</a></div></div>
            <div class="row r7"><label>رقم المعاملة</label><div class="field dis ph">رقم المعاملة</div></div>
            <div class="foot"><button class="open"><svg width="10" height="10" viewBox="0 0 10 10" fill="none" stroke="#fff"><path d="M.5.5h7l2 2v7h-9zM2.500 9.500v-4h5v4M2.500.5v3h4v-3"/></svg><b>|</b><span>فتـح المعاملة</span></button></div>
          </aside>
        </div>
      </main>
      <div class="scrollbar"><span class="up"></span><span class="thumb"></span><span class="down"></span></div>
    </div>

    <footer class="downloads">
      <div class="dl">
        <svg width="18" height="16" viewBox="0 0 18 16"><path d="M2 1h13l2 4v9.500H1V5z" fill="#b0854f"/><path d="M2 1h13l2 4.500H1z" fill="#dbbd94"/><path d="M1 5.500h16v4H1z" fill="#c39b66"/><path d="M9 1v6M5 4.500h8" stroke="#f3e2c8" stroke-width="1.200"/></svg>
        <span class="dl-name">portfolio.rar</span>
        <svg width="12" height="8" viewBox="0 0 12 8"><path d="M1.500 6.500L6 2l4.500 4.500" fill="none" stroke="#777" stroke-width="1.600"/></svg>
      </div>
      <span class="showall">SHOW ALL</span>
      <svg width="12" height="12" viewBox="0 0 10 10"><path d="M1 1l8 8M9 1l-8 8" stroke="#757575" stroke-width="1.500"/></svg>
    </footer>
  </div>
</div>
</body>
</html>
```
FILE: styles.css
```css
* { box-sizing: border-box; }
body { margin: 0; width: 1360px; height: 768px; overflow: hidden; font-family: "Open Sans", "DejaVu Sans", sans-serif; color: #333; display: grid; grid-template-rows: 24px 744px; }
svg { display: block; flex: none; }
.defs { position: absolute; width: 0; height: 0; }
span, label, strong, a, h1, h2 { white-space: nowrap; }
i { font-style: normal; }

.panelbar { background: linear-gradient(#59574c, #3d3c38); display: flex; justify-content: space-between; align-items: center; padding: 0 8px 0 6px; color: #dfdbd2; }
.win-title { font: bold 15px/24px "Open Sans", "DejaVu Sans", sans-serif; white-space: nowrap; }
.tray { display: flex; align-items: center; gap: 11px; }
.tray svg:first-child { margin-right: -1px; }
.lang { background: #dfdbd2; color: #45433d; width: 20px; height: 20px; border-radius: 2px; font-size: 13px; line-height: 20px; text-align: center; }
.clock { font-size: 14px; line-height: 24px; }

.desktop { display: grid; grid-template-columns: 61px 1299px; min-height: 0; }
.launcher { background: linear-gradient(90deg, #0d2961, #18386f 50%, #12306b 96%, #3b5381 99%); display: flex; flex-direction: column; align-items: center; gap: 7px; padding: 6px 1px 0 0; position: relative; overflow: hidden; }
.app { position: relative; width: 48px; height: 48px; flex: none; border-radius: 4px; background: linear-gradient(#4a5f8c, #253f76); border: 1px solid #5f76a2; }
.app svg { width: 48px; height: 48px; margin: -1px; }
.blue { background: #3455a6; border-color: #5572b8; }
.orange { background: linear-gradient(#c7774d, #bb8f75); border-color: #f6a266; }
.sky { background: linear-gradient(#1a4f9b, #2487e0); }
.maroon { background: #8b3150; border-color: #b86780; }
.gold { background: #b3974e; border-color: #cdb877; }
.green { background: #43ae78; border-color: #78cfa0; }
.steel { background: #416fae; border-color: #6d95c8; }
.pip::before, .pips::before { content: ""; position: absolute; left: -7px; top: 20px; border: 4px solid transparent; border-left-color: #cdd9ec; border-right: 0; }
.pips::before { width: 4px; height: 8px; border: 0; border-top: 2px solid #dde; border-bottom: 2px solid #dde; }
.active::after { content: ""; position: absolute; right: -7px; top: 20px; border: 4px solid transparent; border-right-color: #e3e8f0; border-left: 0; }
.folded { margin-top: -4px; }

.browser { display: grid; grid-template-rows: 28px 38px 629px 49px; min-width: 0; background: #f2f1f0; }
.tabstrip { background: #3a3935; display: flex; padding: 1px 0 0 6px; border-bottom: 1px solid #999794; }
.tab { position: relative; width: 209px; height: 27px; margin-right: -16px; flex: none; background: #8d8b88; clip-path: polygon(14px 0, 195px 0, 100% 100%, 0 100%); display: flex; align-items: center; padding-left: 18px; }
.tab::before { content: ""; position: absolute; inset: 0 1px; background: #d1d0ce; clip-path: polygon(14px 0, 193px 0, 100% 100%, 0 100%); }
.active-tab { z-index: 1; }
.active-tab::before { background: #f2f1f0; }
.fav, .tab-text, .x { position: relative; }
.fav { margin-right: auto; }
.tab-text { width: 137px; font-size: 15px; line-height: 25px; color: #626262; -webkit-mask-image: linear-gradient(90deg, #000 78%, transparent 98%); mask-image: linear-gradient(90deg, #000 78%, transparent 98%); }
.rtl-tab { font-size: 15.5px; width: 133px; margin-right: 4px; color: #3c3c3c; -webkit-mask-image: linear-gradient(270deg, #000 78%, transparent); mask-image: linear-gradient(270deg, #000 78%, transparent); }
.x { margin: 0 21px 0 3px; }
.newtab { width: 33px; height: 15px; margin: 7px 0 0 10px; background: #d1d0ce; clip-path: polygon(0 0, 26px 0, 100% 100%, 7px 100%); }
.profile { margin-left: auto; margin-right: 5px; width: 25px; height: 18px; border: 1px solid #65635e; border-top: 0; border-radius: 0 0 4px 4px; display: grid; place-items: center; }

.toolbar { display: flex; align-items: center; border-bottom: 1px solid #b8b6b3; padding-left: 10px; height: 38px; }
.omnibox { width: 1011px; height: 28px; margin-left: 6px; background: #fff; border: 1px solid #a9a7a5; border-radius: 3px; display: flex; align-items: center; padding: 0 5px 0 10px; }
.url { margin-left: 9px; margin-right: auto; font-size: 13.7px; color: #8d8d8d; display: flex; }
.host { color: #2f2f2f; }
.exts { display: flex; gap: 16px; margin-left: 10px; }
.cors { width: 16px; height: 16px; background: #3c9b0c; border-radius: 2px; color: #fff; font: bold 6px/16px "DejaVu Sans Condensed", sans-serif; text-align: center; letter-spacing: -.3px; }

.viewport { display: grid; grid-template-columns: 1284px 15px; background: #fff; min-height: 0; overflow: hidden; }
.page { display: grid; grid-template-rows: 99px 45px 485px; }
.site-head { display: grid; grid-template-columns: 61px 213px 734px 276px; }
.actions { display: flex; gap: 15px; padding-left: 23px; }
.user { font-size: 13px; color: #333; padding-top: 1px; }
.user div { display: flex; align-items: center; line-height: 18px; height: 18px; }
.user .u1 { height: 20px; gap: 8px; font: 13px/18px "Liberation Serif", "DejaVu Sans", serif; }
.user .u2 { height: 21px; gap: 9px; word-spacing: 3px; }
.user .u3 { height: 20px; gap: 4px; padding-top: 3px; }
.user .u4 { font-size: 14px; height: 17px; }
.titles { text-align: center; padding-left: 2px; }
.titles h1 { margin: 0; font: bold 22.2px/44px "Open Sans", "DejaVu Sans Condensed", sans-serif; }
.titles h2 { margin: 0; font-size: 16px; line-height: 26px; font-weight: normal; color: #16703d; }
.emblem { display: flex; flex-direction: column; align-items: center; padding: 4px 0 0 0; margin-left: 152px; width: 90px; }
.emb-text { font: bold 6.5px/10px "DejaVu Sans Condensed", sans-serif; color: #b8431d; margin-top: -11px; }

.actionbar { background: #2f8f96; display: flex; justify-content: space-between; padding: 9px 27px 0 0; }
.icons { display: flex; padding-top: 2px; }
.grp { display: flex; justify-content: center; height: 25px; border-right: 1px solid #fff; }
.grp i { display: grid; place-items: center; width: 30px; height: 22px; }
.g1 { width: 96px; padding-left: 21px; }
.g2 { width: 109px; }
.g3 { width: 136px; } .g3 i { width: 29px; }
.g4 { width: 51px; }
.g5, .g6 { width: 49px; } .g5 i { height: 25px; }
.g7 { width: 39px; }
.g8 { width: 82px; }
.buttons { display: flex; gap: 9px; }
button { font-family: inherit; border: 0; display: flex; align-items: center; padding: 0; }
.buttons button { height: 24px; background: #fff; border-radius: 3px; padding: 0 7px; gap: 2px; font-size: 11.3px; color: #222; }
.w87 { width: 87px; } .w100 { width: 100px; } .w135 { width: 135px; } .w137 { width: 137px; }
button b { font-weight: normal; font-size: 9px; color: #a67433; font-family: "Liberation Sans", sans-serif; }

.work { display: grid; grid-template-columns: 899px 385px; min-height: 0; }
.left { display: grid; grid-template-rows: 388px 97px; }
.map { background: #f4ffd5; }
.inbox { background: #fafafa; }
.inbox-head { height: 46px; border-bottom: 1px solid #ddd; display: flex; justify-content: space-between; padding: 9px 9px 0 16px; }
.inbox-head > svg { margin-top: 5px; }
.inbox-tab { width: 102px; height: 37px; background: #fff; border: 1px solid #ddd; border-bottom: 0; border-radius: 4px 4px 0 0; text-align: center; font-size: 13px; line-height: 34px; color: #555; }
.cols { height: 35px; background: #fff; font: bold 12px/34px "Open Sans", "DejaVu Sans Condensed", sans-serif; color: #333; display: flex; padding-right: 13px; }
.c1 { width: 57px; } .c2 { width: 83px; } .c3 { width: 118px; } .c4 { width: 120px; } .c5 { width: 230px; } .c6 { width: 77px; } .c7 { width: 119px; }

.side { border-left: 1px solid #e7e7e7; border-right: 1px solid #eee; font-size: 11.4px; padding: 0 8px 0 13px; }
.side-head { height: 46px; border-bottom: 1px solid #e2e2e2; margin-right: 4px; display: flex; justify-content: space-between; padding: 17px 0 0; }
.side-title { font-size: 16px; line-height: 17px; margin-right: -4px; }
.row { display: flex; align-items: center; height: 27px; padding-right: 27px; }
.row label { width: 112px; line-height: 23px; height: 27px; }
.field { width: 223px; height: 27px; border: 1px solid #70a096; border-radius: 4px; padding: 0 5px; line-height: 24px; background: #fff; position: relative; }
.dis { background: #eee; }
.short { width: 187px; }
.ph { color: #999; padding-right: 9px; }
.r4 .ph { font-size: 12px; } .r4 label { font-size: 12px; }
.num { color: #555; font-family: "Liberation Serif", serif; font-size: 11px; }
.select::after { content: ""; position: absolute; left: 4px; top: 11px; border: 4px solid transparent; border-top-color: #bbb; border-bottom: 0; }
.erase { width: 25px; height: 22px; margin-right: 11px; border: 1px solid #fdbf4d; border-radius: 4px; display: grid; place-items: center; }
.r1 { margin-top: 4px; } .r2 { margin-top: 5px; } .r3 { margin-top: 4px; }
.attach { display: flex; align-items: center; height: 23px; margin-top: 8px; padding: 0 9px 0 2px; }
.attach strong, .sub, .files-h { font: bold 10.8px/20px "Open Sans", "DejaVu Sans Condensed", sans-serif; }
.count { color: red; margin-right: 5px; font: 11px "Liberation Serif", serif; }
.add { margin-right: auto; width: 87px; height: 23px; background: #dedede; border: 1px solid #70a096; border-radius: 4px; gap: 3px; padding: 0 3px; font-size: 10px; color: #444; }
.files { margin: 15px 9px 0 0; border: 1px solid #659a94; height: 49px; }
.files .files-h { background: #659a94; color: #fff; height: 24px; line-height: 23px; font-size: 10.3px; padding-right: 40px; }
.files-b { height: 23px; line-height: 22px; padding-right: 4px; }
.side .sub { height: 27px; line-height: 29px; padding-right: 14px; }
.r5 { margin-top: 5px; } .r6 { margin-top: 4px; } .r7 { margin-top: 2px; }
.radios { display: flex; width: 223px; height: 27px; line-height: 24px; }
.radio { width: 10px; height: 10px; border-radius: 50%; border: 1px solid #999; background: #e8e8e8; margin: 5px 1px 0 4px; }
.on { background: radial-gradient(circle, #444 0 2px, #e8e8e8 3px); }
.ra { margin-left: 17px; }
.more { margin-right: auto; color: #276a6a; padding-top: 4px; }
.foot { border-top: 1px solid #e2e2e2; margin: 9px 22px 0 0; padding-top: 3px; }
.open { margin-right: auto; margin-left: -3px; width: 101px; height: 26px; background: #2f8f96; border: 1px solid #4d9c96; border-radius: 4px; color: #fff; gap: 4px; padding: 0 9px; font-size: 11.3px; }
.add b { color: #555; } .open b { color: #cfe6e6; }

.scrollbar { background: #f1f1f1; display: flex; flex-direction: column; align-items: center; }
.up, .down { border: 4px solid transparent; border-bottom-color: #555; border-top: 0; margin: 6px 0 15px; }
.thumb { width: 11px; height: 588px; background: #c1c1c1; }
.down { border-bottom: 0; border-top: 4px solid #888; margin: 5px 0; }

.downloads { border-top: 1px solid #c6c4c2; background: #f2f1f0; display: flex; align-items: center; padding-right: 12px; height: 49px; }
.dl { width: 231px; height: 37px; border-right: 1px solid #c9c7c5; display: flex; align-items: center; padding: 0 17px 0 19px; }
.dl-name { margin: 0 auto 0 12px; font-size: 15px; }
.showall { margin: 0 25px 0 auto; font-size: 15px; }
```
